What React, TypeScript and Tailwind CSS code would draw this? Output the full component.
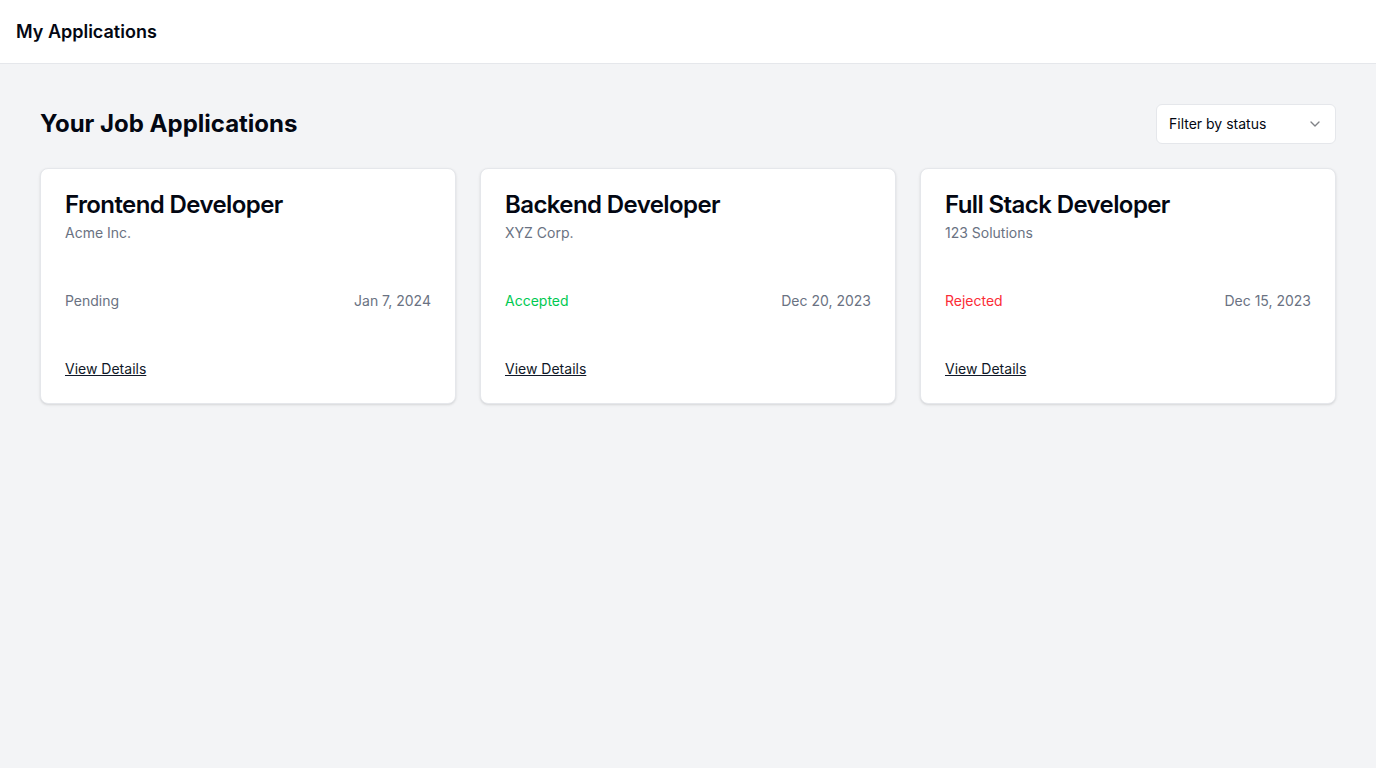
import React from 'react';

interface Application {
  id: number;
  title: string;
  company: string;
  status: 'Pending' | 'Accepted' | 'Rejected';
  date: string;
}

const applications: Application[] = [
  { id: 1, title: 'Frontend Developer', company: 'Acme Inc.', status: 'Pending', date: 'Jan 7, 2024' },
  { id: 2, title: 'Backend Developer', company: 'XYZ Corp.', status: 'Accepted', date: 'Dec 20, 2023' },
  { id: 3, title: 'Full Stack Developer', company: '123 Solutions', status: 'Rejected', date: 'Dec 15, 2023' },
];

const statusColor = (status: Application['status']) => {
  if (status === 'Accepted') return 'text-green-500';
  if (status === 'Rejected') return 'text-red-500';
  return 'text-gray-500';
};

const ChevronDown = () => (
  <svg width="16" height="16" viewBox="0 0 24 24" fill="none" stroke="currentColor" strokeWidth="2" strokeLinecap="round" strokeLinejoin="round" className="opacity-50">
    <path d="m6 9 6 6 6-6" />
  </svg>
);

const App: React.FC = () => {
  return (
    <div className="min-h-screen bg-gray-100 text-gray-950" style={{ fontFamily: 'Inter, "Liberation Sans", sans-serif' }}>
      <header className="h-16 bg-white border-b border-gray-200 px-4 flex items-center">
        <h1 className="text-lg font-semibold">My Applications</h1>
      </header>

      <main className="p-10">
        <div className="flex items-center justify-between mb-6">
          <h2 className="text-2xl font-bold">Your Job Applications</h2>
          <button className="w-[180px] h-10 rounded-md border border-gray-200 bg-white px-3 py-2 text-sm flex items-center justify-between">
            <span>Filter by status</span>
            <ChevronDown />
          </button>
        </div>

        <div className="grid grid-cols-3 gap-6">
          {applications.map((app) => (
            <div key={app.id} className="bg-white rounded-lg border border-gray-200 shadow-sm">
              <div className="p-6 flex flex-col gap-1.5">
                <h3 className="text-2xl font-semibold leading-none tracking-tight">{app.title}</h3>
                <p className="text-sm text-gray-500">{app.company}</p>
              </div>
              <div className="px-6 pt-6 flex items-center justify-between text-sm">
                <span className={statusColor(app.status)}>{app.status}</span>
                <span className="text-gray-500">{app.date}</span>
              </div>
              <div className="p-6 pt-12 flex items-center">
                <a href="#" className="text-sm underline text-gray-900">View Details</a>
              </div>
            </div>
          ))}
        </div>
      </main>
    </div>
  );
};

export default App;
